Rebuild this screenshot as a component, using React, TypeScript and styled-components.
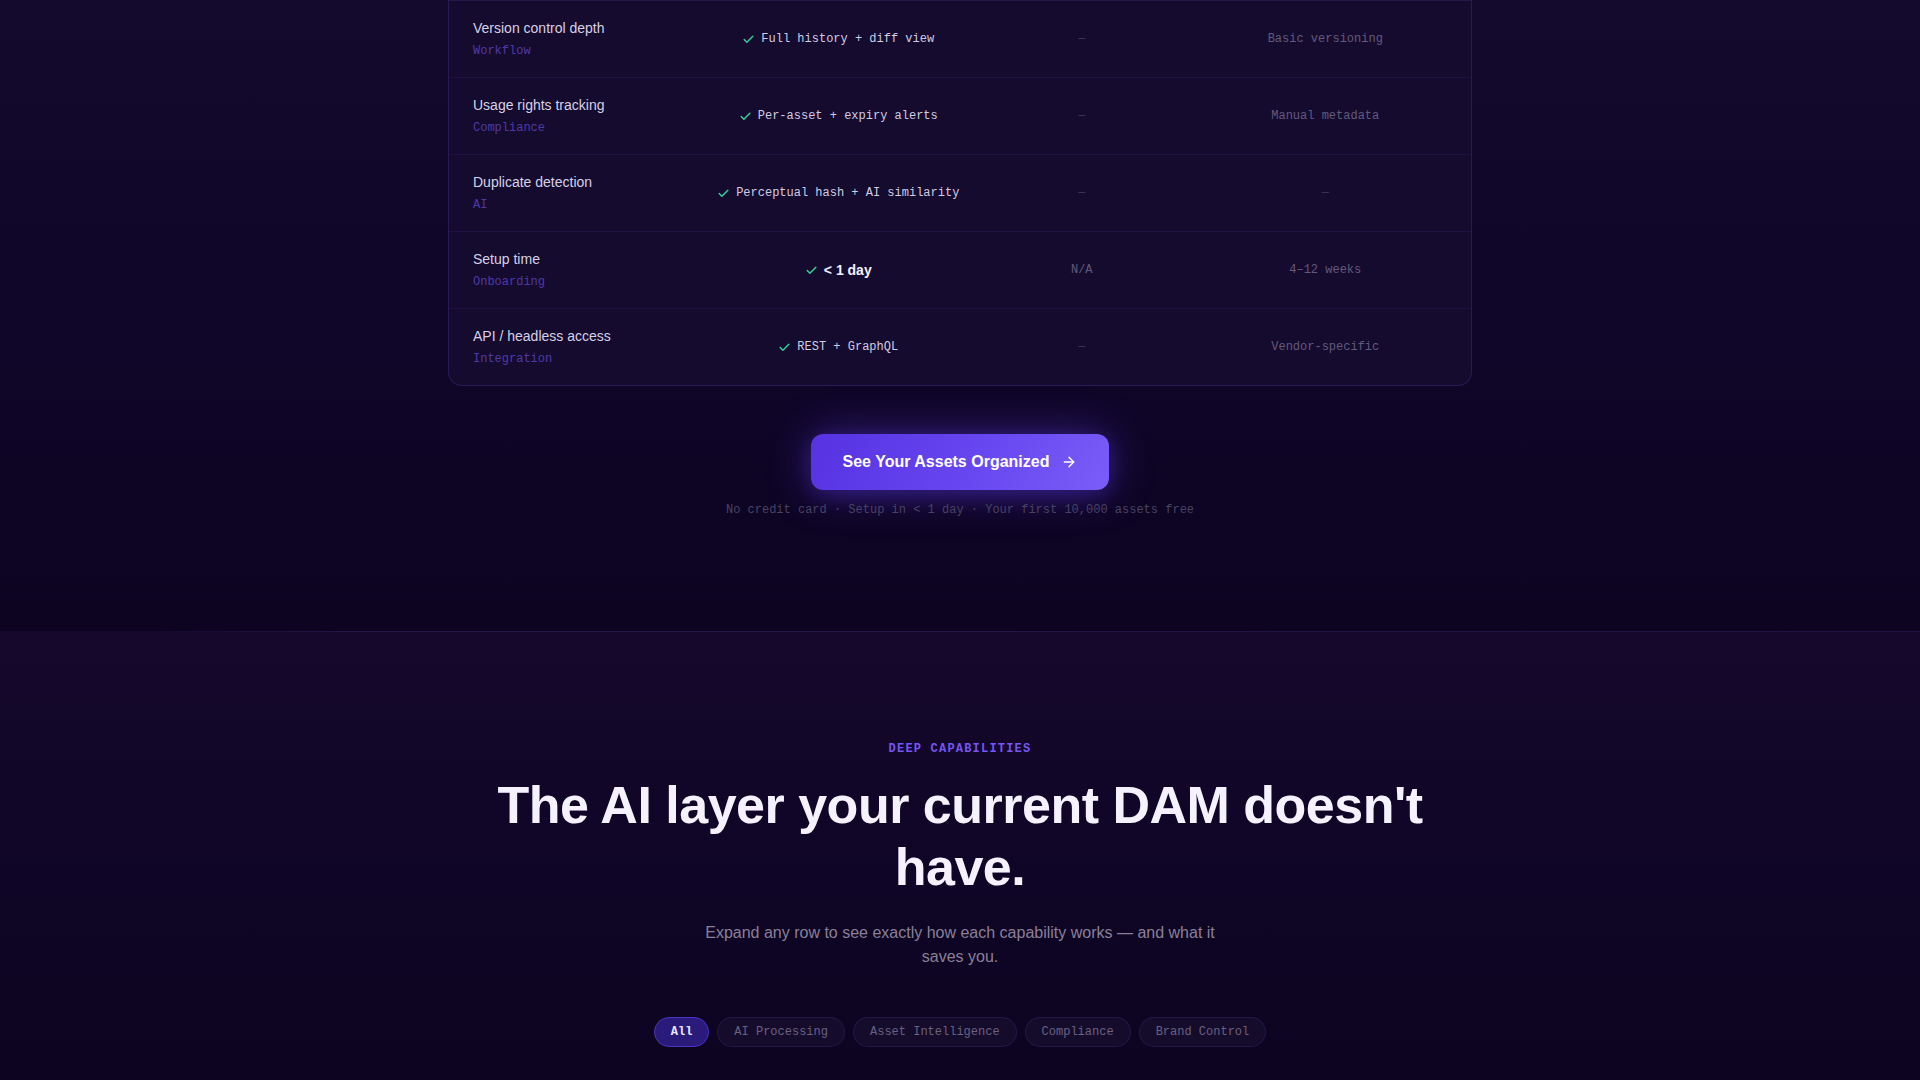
import styled, { createGlobalStyle } from "styled-components";
import { ArrowRight } from "lucide-react";

const GlobalStyle = createGlobalStyle`
  * { box-sizing: border-box; }
  body {
    margin: 0;
    background: #0d0523;
    font-family: "Liberation Sans", Arial, sans-serif;
    color: #e8e3f5;
  }
`;

const mono = `"Liberation Mono", "DejaVu Sans Mono", monospace`;

const Page = styled.main`
  min-height: 100vh;
  overflow: hidden;
`;

const CompareSection = styled.section`
  padding: 0 24px 113px;
  background: linear-gradient(180deg, #140a2d 0%, #10062a 45%, #0c0421 100%);
`;

const Table = styled.div`
  max-width: 1024px;
  margin: 0 auto;
  background: #150b2f;
  border: 1px solid rgba(124, 92, 246, 0.2);
  border-top-color: rgba(124, 92, 246, 0.14);
  border-radius: 0 0 14px 14px;
  overflow: hidden;
`;

const Row = styled.div<{ $last?: boolean }>`
  display: grid;
  grid-template-columns: repeat(4, 1fr);
  align-items: center;
  padding: 17px 24px;
  border-bottom: ${(p) => (p.$last ? "none" : "1px solid rgba(124, 92, 246, 0.1)")};
`;

const Feature = styled.div`
  display: flex;
  flex-direction: column;
  gap: 4px;
`;

const FeatureName = styled.span`
  font-size: 14px;
  line-height: 20px;
  color: #d7d1e6;
`;

const Category = styled.span`
  font-family: ${mono};
  font-size: 12px;
  line-height: 18px;
  color: #4e3aa6;
`;

const OurCell = styled.div<{ $strong?: boolean }>`
  display: flex;
  align-items: center;
  justify-content: center;
  gap: 6px;
  font-family: ${(p) => (p.$strong ? `"Liberation Sans", Arial, sans-serif` : mono)};
  font-size: ${(p) => (p.$strong ? "14px" : "12px")};
  font-weight: ${(p) => (p.$strong ? 700 : 400)};
  color: ${(p) => (p.$strong ? "#f4f0ff" : "#d2cbe3")};
`;

const OtherCell = styled.div<{ $dash?: boolean }>`
  text-align: center;
  font-family: ${mono};
  font-size: 12px;
  color: ${(p) => (p.$dash ? "#3d3456" : "#625a7c")};
`;

const Cta = styled.div`
  margin-top: 48px;
  display: flex;
  flex-direction: column;
  align-items: center;
  gap: 12px;
`;

const CtaButton = styled.button`
  display: flex;
  align-items: center;
  gap: 12px;
  height: 56px;
  padding: 0 32px;
  border: none;
  border-radius: 12px;
  background: linear-gradient(120deg, #5632e2 0%, #6747f0 55%, #7a5df8 100%);
  box-shadow: 0 0 44px rgba(110, 72, 255, 0.42), 0 6px 20px rgba(70, 40, 200, 0.3);
  color: #ffffff;
  font-family: "Liberation Sans", Arial, sans-serif;
  font-size: 16px;
  font-weight: 700;
  cursor: pointer;
`;

const CtaNote = styled.p`
  margin: 0;
  font-family: ${mono};
  font-size: 12px;
  line-height: 16px;
  color: #4a4262;
`;

const CapabilitiesSection = styled.section`
  position: relative;
  padding: 110px 24px 60px;
  background: linear-gradient(180deg, #15082c 0%, #0f0526 50%, #0c0420 100%);
  display: flex;
  flex-direction: column;
  align-items: center;
  text-align: center;

  &::before {
    content: "";
    position: absolute;
    top: 0;
    left: 0;
    right: 0;
    height: 1px;
    background: linear-gradient(90deg, transparent 8%, rgba(124, 92, 246, 0.14) 18%, rgba(124, 92, 246, 0.12) 100%);
  }
`;

const Eyebrow = styled.span`
  font-family: ${mono};
  font-size: 12px;
  line-height: 16px;
  font-weight: 700;
  letter-spacing: 0.1em;
  color: #7656f2;
`;

const Heading = styled.h2`
  margin: 17px 0 0;
  max-width: 960px;
  font-size: 52px;
  line-height: 1.2;
  font-weight: 700;
  letter-spacing: -0.5px;
  color: #f5f1ff;
`;

const Lead = styled.p`
  margin: 22px 0 0;
  max-width: 540px;
  font-size: 16px;
  line-height: 24px;
  color: #8a8098;
`;

const Filters = styled.div`
  margin-top: 48px;
  display: flex;
  gap: 8px;
`;

const Pill = styled.button<{ $active?: boolean }>`
  padding: 6px 16px;
  border-radius: 999px;
  border: 1px solid ${(p) => (p.$active ? "#4a32c4" : "rgba(124, 92, 246, 0.14)")};
  background: ${(p) => (p.$active ? "#2a1a7a" : "#150c2c")};
  color: ${(p) => (p.$active ? "#ece8ff" : "#6a6080")};
  font-family: ${mono};
  font-size: 12px;
  line-height: 16px;
  font-weight: ${(p) => (p.$active ? 700 : 400)};
  cursor: pointer;
`;

const Check = () => (
  <svg width="13" height="13" viewBox="0 0 24 24" fill="none" stroke="#34d399" strokeWidth="2.6" strokeLinecap="round" strokeLinejoin="round">
    <polyline points="20 6 9 17 4 12" />
  </svg>
);

type CompareRow = {
  feature: string;
  category: string;
  ours: string;
  strong?: boolean;
  legacy: string;
  enterprise: string;
};

const rows: CompareRow[] = [
  { feature: "Version control depth", category: "Workflow", ours: "Full history + diff view", legacy: "—", enterprise: "Basic versioning" },
  { feature: "Usage rights tracking", category: "Compliance", ours: "Per-asset + expiry alerts", legacy: "—", enterprise: "Manual metadata" },
  { feature: "Duplicate detection", category: "AI", ours: "Perceptual hash + AI similarity", legacy: "—", enterprise: "—" },
  { feature: "Setup time", category: "Onboarding", ours: "< 1 day", strong: true, legacy: "N/A", enterprise: "4–12 weeks" },
  { feature: "API / headless access", category: "Integration", ours: "REST + GraphQL", legacy: "—", enterprise: "Vendor-specific" },
];

const filters = ["All", "AI Processing", "Asset Intelligence", "Compliance", "Brand Control"];

const App = () => {
  return (
    <Page>
      <GlobalStyle />
      <CompareSection>
        <Table>
          {rows.map((r, i) => (
            <Row key={r.feature} $last={i === rows.length - 1}>
              <Feature>
                <FeatureName>{r.feature}</FeatureName>
                <Category>{r.category}</Category>
              </Feature>
              <OurCell $strong={r.strong}>
                <Check />
                {r.ours}
              </OurCell>
              <OtherCell $dash={r.legacy === "—"}>{r.legacy}</OtherCell>
              <OtherCell $dash={r.enterprise === "—"}>{r.enterprise}</OtherCell>
            </Row>
          ))}
        </Table>

        <Cta>
          <CtaButton>
            See Your Assets Organized
            <ArrowRight size={16} strokeWidth={2.2} />
          </CtaButton>
          <CtaNote>No credit card · Setup in &lt; 1 day · Your first 10,000 assets free</CtaNote>
        </Cta>
      </CompareSection>

      <CapabilitiesSection>
        <Eyebrow>DEEP CAPABILITIES</Eyebrow>
        <Heading>The AI layer your current DAM doesn't have.</Heading>
        <Lead>Expand any row to see exactly how each capability works — and what it saves you.</Lead>
        <Filters>
          {filters.map((f, i) => (
            <Pill key={f} $active={i === 0}>
              {f}
            </Pill>
          ))}
        </Filters>
      </CapabilitiesSection>
    </Page>
  );
};

export default App;
